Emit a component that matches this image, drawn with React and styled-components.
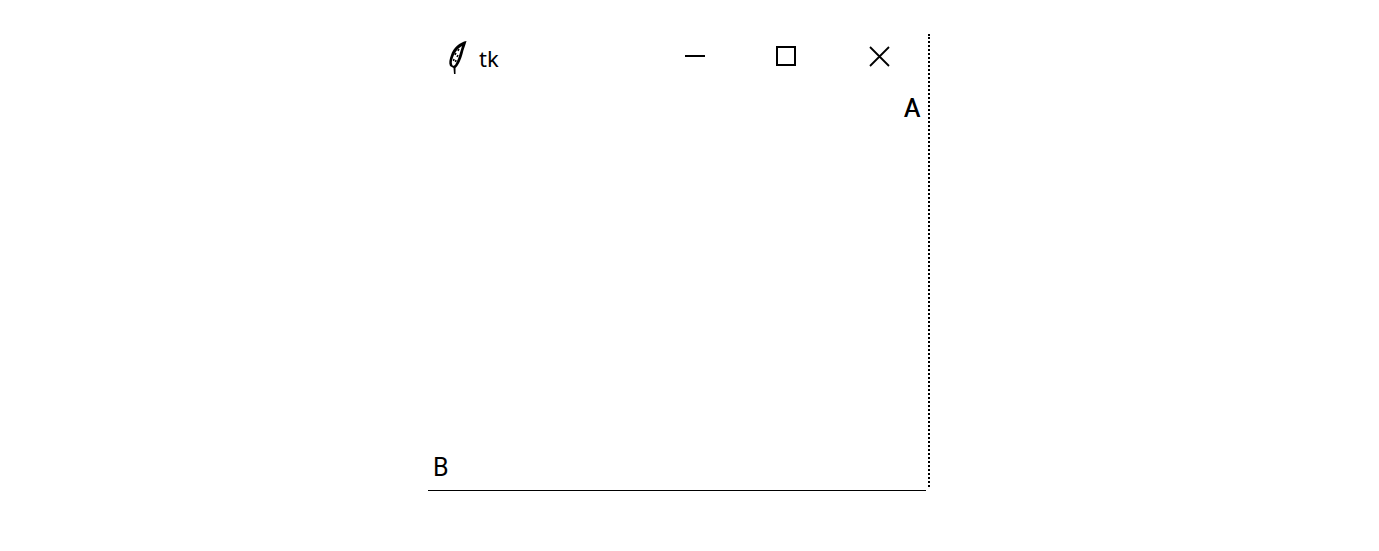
import React from 'react';
import styled, { createGlobalStyle } from 'styled-components';

const GlobalStyle = createGlobalStyle`
    html, body {
        margin: 0;
        padding: 0;
        background: #ffffff;
    }
`

const Page = styled.div`
    width: 1379px;
    height: 551px;
    padding: 34px 0 0 428px;
    box-sizing: border-box;
    overflow: hidden;
`

const Window = styled.div`
    position: relative;
    width: 502px;
    height: 457px;
    box-sizing: border-box;
    display: flex;
    flex-direction: column;
    border-right: 2px dotted #000000;
    border-bottom: 1px solid #000000;

    &::after {
        content: "";
        position: absolute;
        right: -2px;
        bottom: -1px;
        width: 4px;
        height: 3px;
        background: #ffffff;
    }
`

const TitleBar = styled.div`
    display: flex;
    align-items: flex-start;
    height: 60px;
    flex-shrink: 0;
`

const AppIcon = styled.svg`
    width: 20px;
    height: 34px;
    margin: 7px 0 0 20px;
`

const Title = styled.span`
    margin: 12px 0 0 11px;
    width: 206px;
    font-family: "Noto Sans", sans-serif;
    font-size: 22px;
    line-height: 24px;
    color: #000000;
`

const Controls = styled.div`
    display: grid;
    grid-template-columns: 91px 93px 21px;
    margin-top: 12px;
`

const ControlIcon = styled.svg`
    width: 21px;
    height: 21px;
    display: block;
    fill: none;
    stroke: #000000;
    stroke-width: 2;
    shape-rendering: crispEdges;
`

const CloseIcon = styled(ControlIcon)`
    shape-rendering: auto;
    stroke-width: 1.800;
`

const Canvas = styled.div`
    flex: 1;
    display: flex;
    flex-direction: column;
    justify-content: space-between;
    padding: 1px 8px 8px 5px;
`

const Label = styled.span`
    font-family: "Roboto", sans-serif;
    font-size: 25px;
    line-height: 28px;
    color: #000000;
    align-self: ${(props) => (props.$end ? 'flex-end' : 'flex-start')};
    text-shadow: ${(props) => (props.$heavy ? '0.6px 0 0 #000000' : 'none')};
`

function App() {
    return (
        <Page>
            <GlobalStyle />
            <Window>
                <TitleBar>
                    <AppIcon viewBox="0 0 20 34">
                        <path d="M18.500 0 C 12 1 5 7 3 14 C 1.500 18 0.500 22 2 25 L 5.500 27 L 6 33 L 7.500 33 L 7.500 27 C 11 24 13 18 14.500 13 C 15.500 8 17.500 4 18.500 0 Z" fill="#000000" />
                        <path d="M14 5 C 9 8 6 13 4.500 18 C 3.500 21 3.500 23 5 25 L 7 24 C 9.500 20 11 15 12.500 10 Z" fill="#ffffff" />
                        <path d="M11 8 L 10 10 M 8 12 L 7 14 M 10 14 L 9 16 M 6 18 L 5.500 20 M 8 19 L 7.500 21" stroke="#000000" strokeWidth="1.500" />
                    </AppIcon>
                    <Title>tk</Title>
                    <Controls>
                        <ControlIcon viewBox="0 0 21 21">
                            <path d="M0 10 H20" />
                        </ControlIcon>
                        <ControlIcon viewBox="0 0 21 21">
                            <rect x="1" y="1" width="18" height="18" />
                        </ControlIcon>
                        <CloseIcon viewBox="0 0 21 21">
                            <path d="M1 1 L20 20 M20 1 L1 20" />
                        </CloseIcon>
                    </Controls>
                </TitleBar>
                <Canvas>
                    <Label $end $heavy>A</Label>
                    <Label>B</Label>
                </Canvas>
            </Window>
        </Page>
    )
}

export default App
